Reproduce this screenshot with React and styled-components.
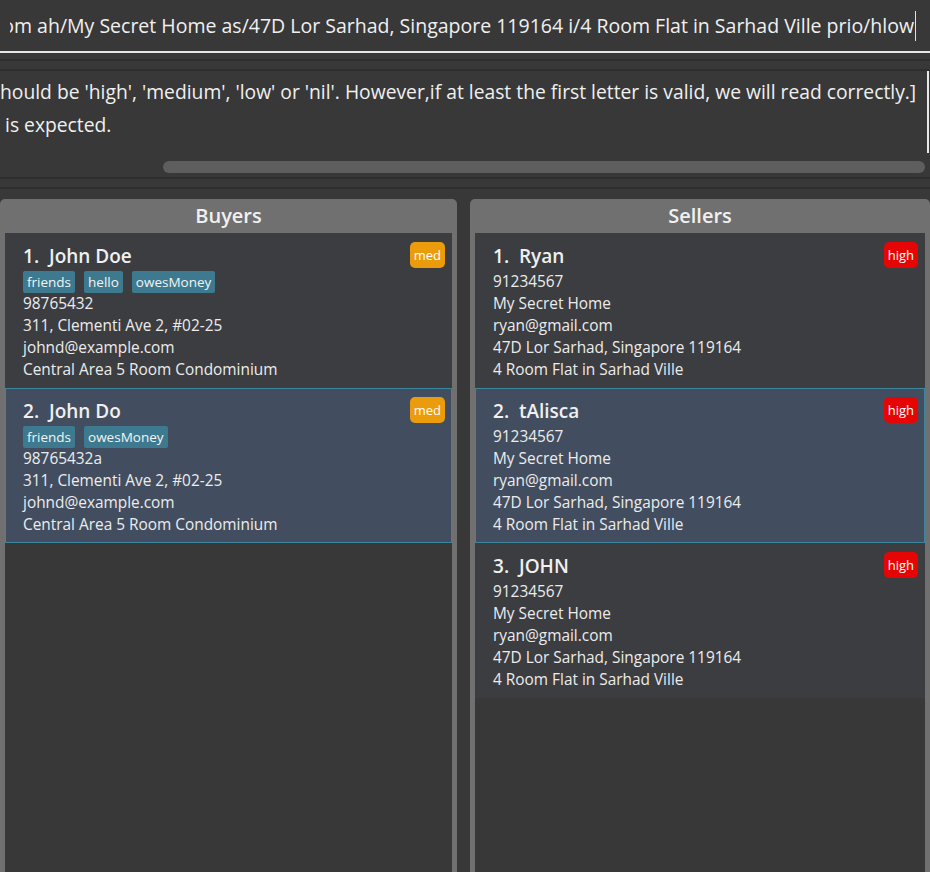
import React from "react";
import styled, { createGlobalStyle } from "styled-components";

const buyers = [
  {
    name: "John Doe",
    prio: "med",
    tags: ["friends", "hello", "owesMoney"],
    lines: ["98765432", "311, Clementi Ave 2, #02-25", "johnd@example.com", "Central Area 5 Room Condominium"],
  },
  {
    name: "John Do",
    prio: "med",
    tags: ["friends", "owesMoney"],
    lines: ["98765432a", "311, Clementi Ave 2, #02-25", "johnd@example.com", "Central Area 5 Room Condominium"],
    selected: true,
  },
];

const sellerLines = ["91234567", "My Secret Home", "ryan@gmail.com", "47D Lor Sarhad, Singapore 119164", "4 Room Flat in Sarhad Ville"];

const sellers = [
  { name: "Ryan", prio: "high", tags: [], lines: sellerLines },
  { name: "tAlisca", prio: "high", tags: [], lines: sellerLines, selected: true },
  { name: "JOHN", prio: "high", tags: [], lines: sellerLines },
];

const PersonCard = ({ index, person }) => (
  <Card selected={person.selected}>
    <NameRow>
      <Name>
        {index}.&nbsp;&nbsp;{person.name}
      </Name>
      <Badge prio={person.prio}>{person.prio}</Badge>
    </NameRow>
    {person.tags.length > 0 && (
      <Tags>
        {person.tags.map((t) => (
          <Tag key={t}>{t}</Tag>
        ))}
      </Tags>
    )}
    {person.lines.map((l, i) => (
      <Line key={i}>{l}</Line>
    ))}
  </Card>
);

const App = () => {
  return (
    <>
      <GlobalStyle />
      <Page>
        <CommandBox>
          <CommandField>
            <CommandText>
              add-s n/JOHN ph/91234567 e/ryan@gmail.com ah/My Secret Home as/47D Lor Sarhad, Singapore 119164 i/4 Room
              Flat in Sarhad Ville prio/hlow
            </CommandText>
            <Caret />
          </CommandField>
        </CommandBox>
        <Divider />
        <ResultBox>
          <ResultInner>
            <ResultText>
              <div>
                hould be 'high', 'medium', 'low' or 'nil'. However,if at least the first letter is valid, we will read
                correctly.]
              </div>
              <div>&nbsp;is expected.</div>
            </ResultText>
            <VScroll />
          </ResultInner>
          <HScrollTrack>
            <HThumb />
          </HScrollTrack>
        </ResultBox>
        <Divider />
        <Panels>
          <Panel>
            <PanelTitle>Buyers</PanelTitle>
            <List>
              {buyers.map((p, i) => (
                <PersonCard key={i} index={i + 1} person={p} />
              ))}
            </List>
          </Panel>
          <Panel>
            <PanelTitle>Sellers</PanelTitle>
            <List>
              {sellers.map((p, i) => (
                <PersonCard key={i} index={i + 1} person={p} />
              ))}
            </List>
          </Panel>
        </Panels>
      </Page>
    </>
  );
};

const GlobalStyle = createGlobalStyle`
  html, body {
    margin: 0;
    padding: 0;
    background: #383838;
  }
  body {
    font-family: "Open Sans", "Noto Sans", sans-serif;
    color: #ececec;
  }
`;

const Page = styled.div`
  width: 930px;
  height: 872px;
  overflow: hidden;
  display: flex;
  flex-direction: column;
  background: #383838;
`;

const CommandBox = styled.div`
  height: 51px;
  display: flex;
  align-items: center;
  padding: 0 14px 0 10px;
  border-bottom: 2px solid #e6e6e6;
  flex-shrink: 0;
`;

const CommandField = styled.div`
  flex: 1;
  display: flex;
  align-items: center;
  justify-content: flex-end;
  overflow: hidden;
`;

const CommandText = styled.div`
  white-space: nowrap;
  font-size: 19.5px;
  color: #f0f0f0;
  flex-shrink: 0;
`;

const Caret = styled.div`
  width: 1px;
  height: 30px;
  background: #e0e0e0;
  margin-left: 1px;
  flex-shrink: 0;
`;

const Divider = styled.div`
  height: 8px;
  margin: 6px 0;
  border-top: 2px solid #2e2e2e;
  border-bottom: 2px solid #2e2e2e;
  flex-shrink: 0;
`;

const ResultBox = styled.div`
  height: 106px;
  display: flex;
  flex-direction: column;
  flex-shrink: 0;
  margin-top: -6px;
  margin-bottom: -6px;
`;

const ResultInner = styled.div`
  flex: 1;
  display: flex;
  overflow: hidden;
`;

const ResultText = styled.div`
  flex: 1;
  white-space: nowrap;
  font-size: 19.3px;
  line-height: 33px;
  padding-top: 4px;
  color: #f0f0f0;
  overflow: hidden;
`;

const VScroll = styled.div`
  width: 2px;
  margin-right: 1px;
  margin-bottom: 8px;
  background: #e8e8e8;
`;

const HScrollTrack = styled.div`
  height: 12px;
  margin: 0 5px 4px 163px;
`;

const HThumb = styled.div`
  height: 100%;
  border-radius: 6px;
  background: #5e5e5e;
`;

const Panels = styled.div`
  flex: 1;
  display: grid;
  grid-template-columns: 457px 460px;
  column-gap: 13px;
  margin-top: 4px;
`;

const Panel = styled.div`
  display: flex;
  flex-direction: column;
  background: #707070;
  border-radius: 5px 5px 0 0;
  padding: 0 5px;
  min-height: 0;
`;

const PanelTitle = styled.div`
  height: 34px;
  line-height: 34px;
  text-align: center;
  font-weight: 600;
  font-size: 20px;
  color: #f0f0f0;
`;

const List = styled.div`
  flex: 1;
  background: #383838;
  display: flex;
  flex-direction: column;
`;

const Card = styled.div`
  background: ${(p) => (p.selected ? "#424e5f" : "#3c3d40")};
  border: 1px solid ${(p) => (p.selected ? "#3d86a0" : "#3c3d40")};
  height: 155px;
  box-sizing: border-box;
  padding: 8px 6px 0 17px;
  display: flex;
  flex-direction: column;
`;

const NameRow = styled.div`
  height: 29px;
  display: flex;
  justify-content: space-between;
  align-items: flex-start;
`;

const Name = styled.div`
  font-size: 19px;
  font-weight: 600;
  line-height: 28px;
  color: #f0f0f0;
`;

const Badge = styled.div`
  height: 26px;
  line-height: 26px;
  padding: 0 4px;
  border-radius: 5px;
  font-size: 13px;
  color: #fff;
  background: ${(p) => (p.prio === "high" ? "#e60505" : "#eb9c0c")};
`;

const Tags = styled.div`
  display: flex;
  gap: 9px;
  height: 22px;
`;

const Tag = styled.div`
  height: 22px;
  line-height: 22px;
  padding: 0 4px;
  border-radius: 2px;
  font-size: 13.5px;
  background: #3d7a90;
  color: #f4f4f4;
`;

const Line = styled.div`
  font-size: 15.4px;
  line-height: 22px;
  color: #ececec;
  white-space: nowrap;
`;

export default App;
